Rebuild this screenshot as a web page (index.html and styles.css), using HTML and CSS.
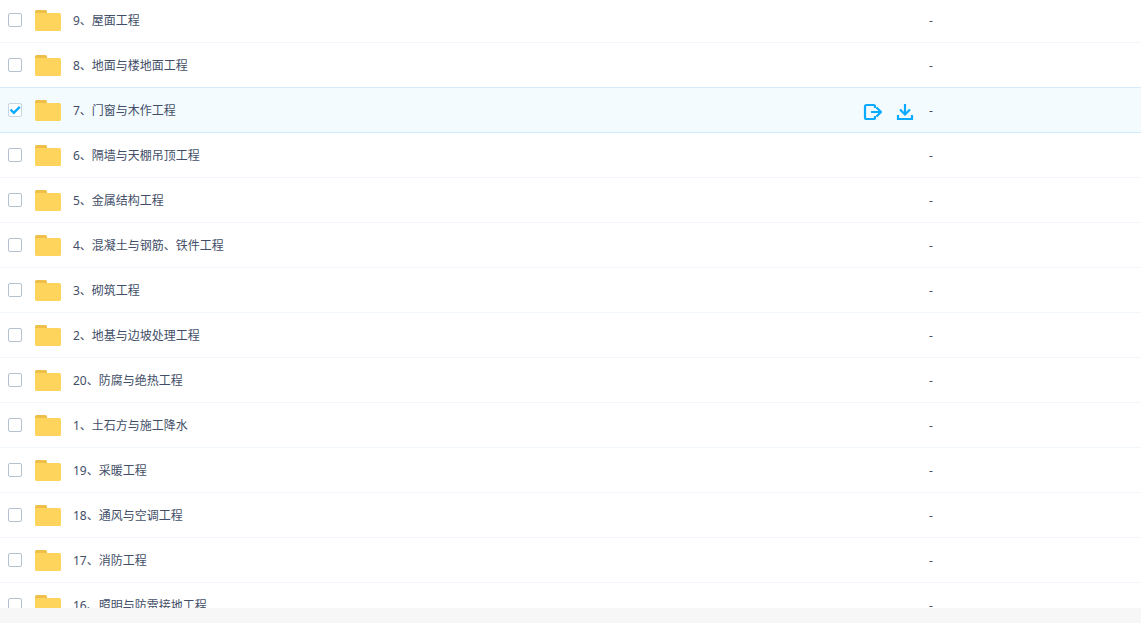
FILE: index.html
```
<!DOCTYPE html>
<html lang="zh-CN">
<head>
<meta charset="utf-8">
<title>文件列表</title>
<link rel="stylesheet" href="styles.css">
</head>
<body>
<svg class="sprite" aria-hidden="true">
  <symbol id="folder" viewBox="0 0 26 22">
    <path fill="#eec04a" d="M0 6V1.500Q0 0 1.500 0H10.500Q12 0 12 1.500V6Z"/>
    <path fill="#ffd45c" d="M0 3H24.500Q26 3 26 4.500V19.500Q26 21 24.500 21H1.500Q0 21 0 19.500Z"/>
  </symbol>
</svg>
<main class="page">
  <div class="list">
    <table class="files">
      <colgroup><col class="col-check"><col class="col-name"><col class="col-size"></colgroup>
      <tbody id="rows"></tbody>
    </table>
  </div>
  <footer class="footer"></footer>
</main>
<script src="app.js"></script>
</body>
</html>
```
FILE: styles.css
```
* {
  box-sizing: border-box;
}

body {
  margin: 0;
  background: #fff;
  color: #424e67;
  font: 12px/18px "Noto Sans", "Noto Sans CJK SC", sans-serif;
}

.sprite {
  position: absolute;
  width: 0;
  height: 0;
}

.page {
  display: flex;
  flex-direction: column;
  height: 100vh;
}

.list {
  flex: 1;
  min-height: 0;
  overflow: hidden;
}

/* the list is scrolled slightly past the first row's top edge */
.files {
  width: 100%;
  margin-top: -2px;
  border-collapse: separate;
  border-spacing: 0;
  table-layout: fixed;
}

.col-check {
  width: 35px;
}

.col-size {
  width: 212px;
}

.files td {
  height: 45px;
  padding: 2px 0 0;
  border-bottom: 1px solid #f2f6fd;
  vertical-align: middle;
}

.files .check-cell {
  padding: 0;
}

.files .before-selected td {
  border-bottom-color: #d5ebfa;
}

.files .selected td {
  border-bottom-color: #cdebfb;
  background: #f3fbff;
}

.check {
  display: block;
  appearance: none;
  width: 14px;
  height: 14px;
  margin: 0 0 0 8px;
  border: 1px solid #b4c1ce;
  border-radius: 2px;
  background: #fff;
}

.check:checked {
  border-color: #c6d5e2;
  background: #fff url("data:image/svg+xml,%3Csvg xmlns='http://www.w3.org/2000/svg' viewBox='0 0 12 12'%3E%3Cpath d='M1.500 5.500L4.800 8.800L10.800 2.800' fill='none' stroke='%2309aaff' stroke-width='2.400'/%3E%3C/svg%3E") center / 12px no-repeat;
}

.name {
  display: flex;
  align-items: center;
}

.folder {
  width: 26px;
  height: 22px;
  margin-right: 12px;
}

.label {
  flex: 1;
}

.actions {
  display: flex;
  gap: 12px;
  padding-top: 2px;
  margin-right: 15px;
}

.action {
  width: 20px;
  height: 20px;
  padding: 0;
  border: 0;
  background: none;
  color: #09aaff;
  cursor: pointer;
}

.action svg {
  display: block;
  width: 20px;
  height: 20px;
  fill: none;
  stroke: currentColor;
  stroke-width: 2.2;
}

.footer {
  height: 15px;
  background: #f7f7f7;
}
```
FILE: app.js
```
const names = [
  "9、屋面工程",
  "8、地面与楼地面工程",
  "7、门窗与木作工程",
  "6、隔墙与天棚吊顶工程",
  "5、金属结构工程",
  "4、混凝土与钢筋、铁件工程",
  "3、砌筑工程",
  "2、地基与边坡处理工程",
  "20、防腐与绝热工程",
  "1、土石方与施工降水",
  "19、采暖工程",
  "18、通风与空调工程",
  "17、消防工程",
  "16、照明与防雷接地工程"
];
const selected = 2;

const actions = `
  <div class="actions">
    <button class="action" type="button" aria-label="分享">
      <svg viewBox="0 0 20 20"><path d="M13 6V4.500Q13 3 11.500 3H4.500Q3 3 3 4.500V15.500Q3 17 4.500 17H11.500Q13 17 13 15.500V14M9 10H19M14.500 5.500L19 10L14.500 14.500"/></svg>
    </button>
    <button class="action" type="button" aria-label="下载">
      <svg viewBox="0 0 20 20"><path d="M11 2V12M6 7.500L11 12.500L16 7.500M4 13V17H18V13"/></svg>
    </button>
  </div>`;

document.getElementById("rows").innerHTML = names.map((name, i) => {
  const state = i === selected ? "selected" : i === selected - 1 ? "before-selected" : "";
  return `<tr class="${state}">
    <td class="check-cell"><input class="check" type="checkbox" id="file-${i}" ${i === selected ? "checked" : ""}></td>
    <td><div class="name">
      <svg class="folder" aria-hidden="true"><use href="#folder"/></svg>
      <label class="label" for="file-${i}">${name}</label>
      ${i === selected ? actions : ""}
    </div></td>
    <td>-</td>
  </tr>`;
}).join("");
```
